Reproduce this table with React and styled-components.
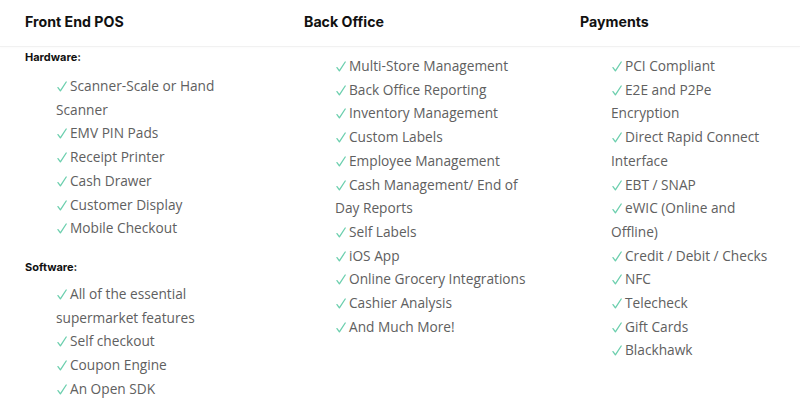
import React from 'react'
import styled, { createGlobalStyle } from 'styled-components'

const GlobalStyle = createGlobalStyle`
  html, body {
    margin: 0;
    padding: 0;
    background: #ffffff;
  }
`

const Page = styled.div`
  width: 800px;
  height: 408px;
  overflow: hidden;
  background: #ffffff;
  font-family: 'Open Sans', 'Liberation Sans', sans-serif;
`

const HeaderRow = styled.div`
  display: grid;
  grid-template-columns: 279px 276px 1fr;
  padding: 0 10px 0 25px;
  height: 46px;
  border-bottom: 1px solid #f1f1f1;
  box-shadow: 0 1px 2px rgba(0, 0, 0, 0.02);
`

const Heading = styled.h3`
  margin: 0;
  font-family: 'Inter', 'Liberation Sans', sans-serif;
  font-size: 14.2px;
  font-weight: 700;
  color: #111;
  line-height: 44px;
`

const Body = styled.div`
  display: grid;
  grid-template-columns: 279px 276px 1fr;
  padding: 0 10px 0 25px;
`

const Column = styled.div`
  padding-top: ${(p) => p.$top || 7}px;
`

const Label = styled.div`
  font-family: 'Inter', 'Liberation Sans', sans-serif;
  font-size: 11px;
  font-weight: 700;
  color: #111;
  line-height: 14px;
  margin: ${(p) => p.$margin};
`

const List = styled.ul`
  list-style: none;
  margin: 0;
  padding: 0 0 0 31px;
  width: ${(p) => p.$width}px;
`

const Item = styled.li`
  font-size: 13.7px;
  line-height: 23.7px;
  color: #606060;
`

const CheckIcon = styled.svg`
  width: 10px;
  height: 11px;
  margin: 0 3px 0 1px;
  vertical-align: -1px;
`

const Check = () => (
  <CheckIcon viewBox="0 0 10 11">
    <path d="M1 6.6 L3.4 9.8 L9.2 1" fill="none" stroke="#6ccfae" strokeWidth="1.3" strokeLinecap="round" strokeLinejoin="round" />
  </CheckIcon>
)

const hardware = [
  'Scanner-Scale or Hand Scanner',
  'EMV PIN Pads',
  'Receipt Printer',
  'Cash Drawer',
  'Customer Display',
  'Mobile Checkout',
]

const software = [
  'All of the essential supermarket features',
  'Self checkout',
  'Coupon Engine',
  'An Open SDK',
]

const backOffice = [
  'Multi-Store Management',
  'Back Office Reporting',
  'Inventory Management',
  'Custom Labels',
  'Employee Management',
  'Cash Management/ End of Day Reports',
  'Self Labels',
  'iOS App',
  'Online Grocery Integrations',
  'Cashier Analysis',
  'And Much More!',
]

const payments = [
  'PCI Compliant',
  'E2E and P2Pe Encryption',
  'Direct Rapid Connect Interface',
  'EBT / SNAP',
  'eWIC (Online and Offline)',
  'Credit / Debit / Checks',
  'NFC',
  'Telecheck',
  'Gift Cards',
  'Blackhawk',
]

const Features = ({ items, width }) => (
  <List $width={width}>
    {items.map((text) => (
      <Item key={text}>
        <Check />
        {text}
      </Item>
    ))}
  </List>
)

export default function App() {
  return (
    <Page>
      <GlobalStyle />
      <HeaderRow>
        <Heading>Front End POS</Heading>
        <Heading>Back Office</Heading>
        <Heading>Payments</Heading>
      </HeaderRow>
      <Body>
        <Column $top={3}>
          <Label $margin="0 0 10px">Hardware:</Label>
          <Features items={hardware} width={175} />
          <Label $margin="20px 0 8px">Software:</Label>
          <Features items={software} width={175} />
        </Column>
        <Column>
          <Features items={backOffice} width={200} />
        </Column>
        <Column>
          <Features items={payments} width={165} />
        </Column>
      </Body>
    </Page>
  )
}
